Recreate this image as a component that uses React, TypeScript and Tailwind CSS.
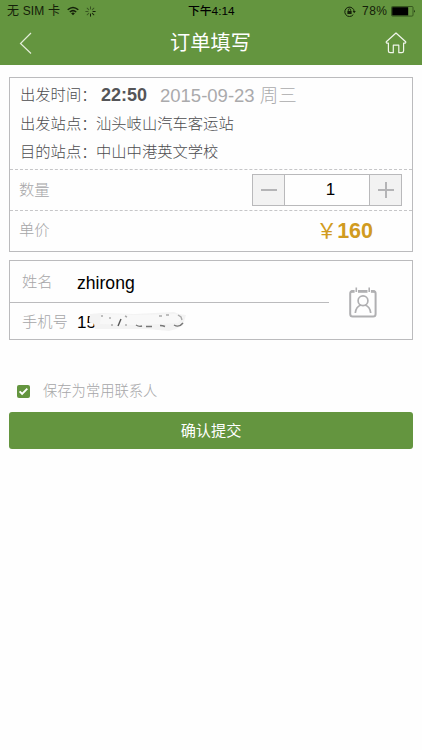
import type { ReactNode } from 'react';

const spokes = [0, 45, 90, 135, 180, 225, 270, 315];

function StatusBar() {
  return (
    <div className="flex h-[21px] items-center pl-[7px] pr-[6px] pt-px text-[12px] leading-[20px] text-[#142009]">
      <div className="flex w-[181px] items-center">
        <span className="w-[54px] whitespace-nowrap tracking-[0.15px]">无 SIM 卡</span>
        <svg className="ml-[6px] h-[10px] w-[12px]" viewBox="0 0 12 10" fill="none" stroke="#142009" strokeWidth="1.5">
          <path d="M.7 3.8Q6-.9 11.3 3.8M2.8 6Q6 3.2 9.2 6" />
          <path d="M4.1 7.3Q6 5.8 7.9 7.3L6 9.2Z" fill="#142009" stroke="none" />
        </svg>
        <svg className="ml-[6px] h-[11px] w-[11px]" viewBox="0 0 11 11" stroke="#142009" strokeWidth="1" strokeLinecap="round">
          {spokes.map((angle, i) => (
            <path key={angle} d="M5.5 .8V3" opacity={i > 1 && i < 5 ? 1 : 0.55} transform={`rotate(${angle} 5.5 5.5)`} />
          ))}
        </svg>
      </div>
      <span className="w-[100px] whitespace-nowrap text-[11.8px] font-medium text-black">下午4:14</span>
      <div className="ml-auto flex items-center">
        <svg className="h-[11px] w-[12px]" viewBox="0 0 12 11" fill="none" stroke="#142009">
          <path d="M9.3 8.6A4.7 4.7 0 1 1 10.2 5.5" />
          <path d="M8.6 5H11.8L10.2 7.2Z" fill="#142009" stroke="none" />
          <rect x="3.4" y="5" width="4.2" height="3" fill="#142009" stroke="none" />
          <path d="M4.3 5V4a1.2 1.2 0 0 1 2.4 0V5" strokeWidth=".8" />
        </svg>
        <span className="ml-[6px] w-[29px] text-[12px] tracking-[0.5px]">78%</span>
        <svg className="h-[11px] w-[25px]" viewBox="0 0 25 11">
          <rect x=".5" y=".5" width="21.5" height="9.6" rx="1" fill="none" stroke="#2c4a16" strokeWidth=".8" />
          <rect x="1.2" y="1.2" width="16" height="8.2" fill="#000" />
          <path d="M23 3.8q1.8 1.5 0 3Z" fill="#142009" />
        </svg>
      </div>
    </div>
  );
}

function TitleBar() {
  return (
    <div className="flex h-[44px] items-center justify-between pl-[19px] pr-[15px]">
      <svg className="h-[22px] w-[22px]" viewBox="0 0 22 22" fill="none" stroke="#e3edd9" strokeWidth="1.2">
        <path d="M12 1 1.5 11.5 12 21.5" />
      </svg>
      <h1 className="pr-[5px] text-[20.2px] leading-[30px] text-white">订单填写</h1>
      <svg className="h-[22px] w-[22px]" viewBox="0 0 22 22" fill="none" stroke="#f0f5eb" strokeWidth="1.2" strokeLinejoin="round">
        <path d="M11 1 1.3 9.7Q.7 11.4 3.4 11.1V18.8Q3.4 20.7 5.3 20.7H8.3V13.2H13.8V20.7H16.8Q18.6 20.7 18.6 18.8V11.1Q21.3 11.4 20.7 9.7Z" />
      </svg>
    </div>
  );
}

function TripLine({ label, children }: { label: string; children: ReactNode }) {
  return (
    <div className="flex h-[28.5px] items-center whitespace-nowrap">
      <span className="w-[76px]">{label}</span>
      {children}
    </div>
  );
}

function TripCard() {
  return (
    <section className="mt-[12px] h-[175px] border-[1.5px] border-[#bbbbbd] text-[15.3px] font-light text-[#4c4c4f]">
      <div className="h-[91px] pl-[10px] pt-[3.5px]">
        <TripLine label="出发时间：">
          <span className="ml-[5px] w-[59px] text-[18px] font-bold text-[#555558]">22:50</span>
          <span className="text-[18.5px] text-[#aaaaac]">2015-09-23 周三</span>
        </TripLine>
        <TripLine label="出发站点：">汕头岐山汽车客运站</TripLine>
        <TripLine label="目的站点：">中山中港英文学校</TripLine>
      </div>
      <div className="flex h-[41px] items-center justify-between border-t border-dashed border-[#c6c6c8] pl-[9px] pr-[10px] text-[#a6a6a8]">
        <span>数量</span>
        <div className="flex h-[32px] w-[150px] border border-[#b9b9bb]">
          <button className="flex w-[32px] items-center justify-center border-r border-[#b9b9bb] bg-[#f2f2f2]">
            <span className="h-[2px] w-[16px] bg-[#b4b4b6]" />
          </button>
          <span className="flex flex-1 items-center justify-center pl-[7px] text-[17px] font-normal text-black">1</span>
          <button className="flex w-[32px] items-center justify-center border-l border-[#b9b9bb] bg-[#f2f2f2]">
            <svg className="h-[16px] w-[16px]" viewBox="0 0 16 16" stroke="#b4b4b6" strokeWidth="2">
              <path d="M0 8H16M8 0V16" />
            </svg>
          </button>
        </div>
      </div>
      <div className="flex h-[40px] items-center justify-between border-t border-dashed border-[#c6c6c8] pl-[9px] pr-[39px] text-[#a6a6a8]">
        <span>单价</span>
        <span className="flex items-center text-[#d19b20]">
          <span className="w-[21px] text-[21px] leading-[24px] font-normal">￥</span>
          <span className="text-[21.5px] leading-[24px] font-bold">160</span>
        </span>
      </div>
    </section>
  );
}

function RedactedPhone() {
  return (
    <div className="relative h-[24px] w-[112px] text-[17px] leading-[24px] text-black">
      <span>15</span>
      <svg className="absolute left-0 top-0 h-[24px] w-[112px]" viewBox="0 0 112 24">
        <path d="M13 3 24 2 58 3 97 1 102 3 109 4 106 14 99 18 92 20 70 18 50 18 18 18 17 13 12 11Z" fill="#f3f3f3" />
        <path d="M24 3 60 4 98 3 106 6 101 12 62 14 23 13Z" fill="#f8f8f8" />
        <g fill="none" stroke="#555" strokeWidth="1.4">
          <path d="M44 8 41 15" />
          <path d="M59 14q3 2 6 1M69 15.5h6M83 14.5q3 0 5 1M97 14q5 3 9-2" stroke="#777" />
          <path d="M24 5h2M33 6v2M34 14h2M48 5l2 1M49 13v2M82 5h3M89 4h3M101 4l3 2 1 3" stroke="#aaa" />
        </g>
      </svg>
    </div>
  );
}

function ContactCard() {
  return (
    <section className="mt-[8px] flex h-[80px] border-[1.5px] border-[#bbbbbd] text-[15.3px] font-light text-[#a6a6a8]">
      <div className="w-[319px]">
        <div className="flex h-[42px] items-center border-b-[1.5px] border-[#bbbbbd] pl-[12px]">
          <span className="w-[55px] pt-[2px]">姓名</span>
          <span className="pt-[4px] text-[17.6px] font-normal text-black">zhirong</span>
        </div>
        <div className="flex h-[37px] items-center pl-[12px] pt-[2px]">
          <span className="w-[55px] whitespace-nowrap">手机号</span>
          <RedactedPhone />
        </div>
      </div>
      <svg className="ml-[20px] mt-[26px] h-[31px] w-[28px]" viewBox="0 0 28 31" fill="none" stroke="#b0b0b2">
        <rect x="1.2" y="4" width="25.4" height="25.4" rx="2.5" strokeWidth="2" />
        <path d="M2 4.6H25.8" strokeWidth="2.4" />
        <path d="M7.3 1V6M20.2 1V6" stroke="#fff" strokeWidth="3.4" />
        <path d="M7.3 .5V5M20.2 .5V5" strokeWidth="1.6" />
        <circle cx="14" cy="13.7" r="4.9" strokeWidth="1.7" />
        <path d="M6.3 26Q7 19.4 12 18M21.7 26Q21 19.4 16 18" strokeWidth="1.7" />
      </svg>
    </section>
  );
}

export default function App() {
  return (
    <main className="h-[750px] w-[422px] overflow-hidden bg-[#fefefe] font-['Liberation_Sans','Noto_Sans_CJK_SC',sans-serif]">
      <header className="h-[65px] bg-[#64953f]">
        <StatusBar />
        <TitleBar />
      </header>
      <div className="px-[9px]">
        <TripCard />
        <ContactCard />
        <label className="mt-[39px] flex h-[24px] items-center pl-[8px] text-[14.3px] font-light text-[#a6a6a8]">
          <svg className="mr-[13px] h-[13px] w-[13px]" viewBox="0 0 13 13">
            <rect width="13" height="13" rx="2" fill="#64953f" />
            <path d="M2.6 6.4 5.1 8.8 10.3 3.6" fill="none" stroke="#fff" strokeWidth="1.9" />
          </svg>
          <span className="pt-px">保存为常用联系人</span>
        </label>
        <button className="mt-[9px] flex h-[37px] w-full items-center justify-center rounded-[3px] bg-[#64953f] pt-px text-[15.2px] text-white">
          确认提交
        </button>
      </div>
    </main>
  );
}
